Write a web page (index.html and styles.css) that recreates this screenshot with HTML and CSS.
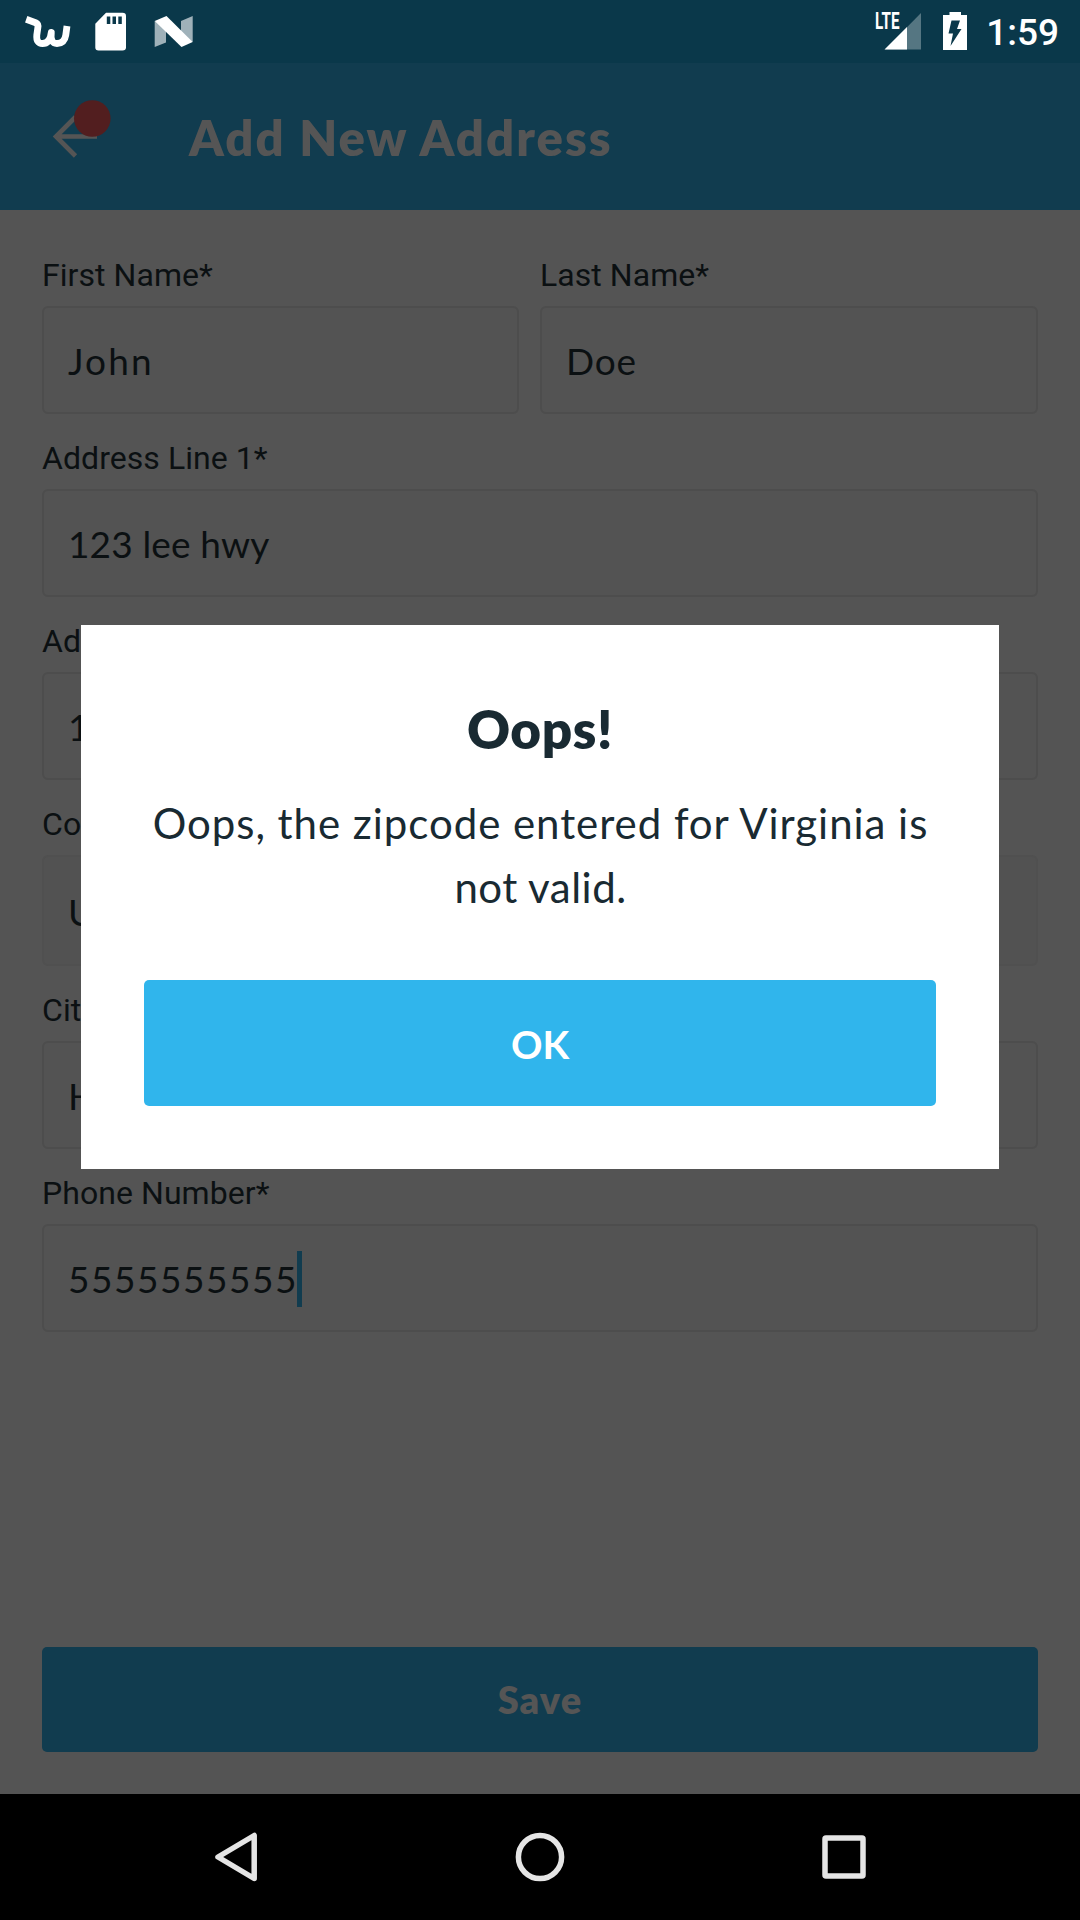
FILE: index.html
```
<!DOCTYPE html>
<html lang="en">
<head>
<meta charset="utf-8">
<title>Add New Address</title>
<link rel="stylesheet" href="styles.css">
</head>
<body>
<div class="screen">
  <header class="status">
    <svg class="status-left" width="220" height="63" viewBox="0 0 220 63">
      <path class="wish" d="M26.200 19.300L35.600 22.700Q38.600 24 37.800 28L36.800 35Q36 43.500 42.500 43.500Q50 43.500 51.300 32.500Q50 43.500 57 43.500Q64.500 43.500 65.800 35L67 26"/>
      <path fill="#fff" fill-rule="evenodd" d="M106 12.700H122.500Q126 12.700 126 16V47.500Q126 50.500 122.500 50.500H98.500Q95.300 50.500 95.300 47.500V23.800ZM106.800 16.500V24H110.300V16.500ZM112.500 16.500V24H116V16.500ZM118.300 16.500V24H121.800V16.500Z"/>
      <path fill="#9fb1b9" d="M154.700 21L166 27V42.500L154.700 47ZM181 21L192.700 16V42L181 36Z"/>
      <path fill="#fff" d="M154.700 21L166.500 16L192.700 42L181.500 47Z"/>
    </svg>
    <div class="status-right">
      <span class="signal">
        <svg width="48" height="63" viewBox="0 0 48 63">
          <path fill="#557682" d="M45 13V49.500H9Z"/>
          <path fill="#fff" d="M31 27V49.500H8.500Z"/>
        </svg>
        <span class="lte">LTE</span>
      </span>
      <svg class="battery" width="24" height="63" viewBox="0 0 24 63">
        <path fill="#fff" d="M6.500 12H18V15H24V50H0V15H6.500Z"/>
        <path fill="#0a384a" d="M8.500 20.500H17L14 29H18.500L7.500 46L10 33.500H5.500Z"/>
      </svg>
      <span class="clock">1:59</span>
    </div>
  </header>
  <div class="appbar">
    <svg class="back" width="80" height="60" viewBox="45 92 80 60">
      <path fill="none" stroke="#555" stroke-width="4.600" d="M75.500 117L56 136.500L75.500 156M56 136.500H97"/>
      <circle cx="92.300" cy="118.500" r="18.300" fill="#521e1f"/>
    </svg>
    <h1 class="title">Add New Address</h1>
  </div>
  <main class="form">
    <div class="row">
      <div class="group first"><div class="label">First Name*</div><div class="field john">John</div></div>
      <div class="group last"><div class="label">Last Name*</div><div class="field doe">Doe</div></div>
    </div>
    <div class="group"><div class="label">Address Line 1*</div><div class="field street">123 lee hwy</div></div>
    <div class="group"><div class="label">Ad</div><div class="field">1</div></div>
    <div class="group"><div class="label">Co</div><div class="field select">U</div></div>
    <div class="group"><div class="label">Cit</div><div class="field">H</div></div>
    <div class="group"><div class="label">Phone Number*</div><div class="field phone">5555555555<span class="caret"></span></div></div>
    <div class="save"><span>Save</span></div>
  </main>
  <nav class="nav">
    <svg width="50" height="60" viewBox="0 0 50 60"><path d="M43.200 8.500V51.500L7 30Z"/></svg>
    <svg width="60" height="60" viewBox="0 0 60 60"><circle cx="30" cy="30" r="21.600"/></svg>
    <svg width="50" height="60" viewBox="0 0 50 60"><rect x="6" y="11" width="38" height="38" rx="1"/></svg>
  </nav>
  <section class="modal">
    <h2 class="modal-title">Oops!</h2>
    <p class="message"><span class="line1">Oops, the zipcode entered for Virginia is</span><br><span class="line2">not valid.</span></p>
    <div class="ok"><span>OK</span></div>
  </section>
</div>
</body>
</html>
```
FILE: styles.css
```
* { box-sizing: border-box; }
body { margin: 0; background: #545454; font-family: Lato, "Open Sans", sans-serif; }
.screen { position: relative; width: 1080px; height: 1920px; overflow: hidden; display: flex; flex-direction: column; }

.status { height: 63px; flex: none; background: #0a384a; display: flex; justify-content: space-between; }
.wish { fill: none; stroke: #fff; stroke-width: 6.8; stroke-linejoin: round; }
.status-right { display: flex; padding-right: 21px; }
.signal { position: relative; width: 48px; margin-right: 19px; }
.signal svg, .battery { display: block; }
.lte { position: absolute; left: -1px; top: 11px; font: 700 23px/22px Roboto, sans-serif; color: #fff; transform: scaleX(.66); transform-origin: 0 0; }
.battery { margin-right: 19px; }
.clock { font: 500 37px/66px Roboto, sans-serif; color: #fff; }

.appbar { height: 147px; flex: none; background: #113c4f; display: flex; align-items: flex-start; padding: 29px 0 0 45px; }
.back { flex: none; overflow: visible; }
.title { margin: 15px 0 0 64px; font-size: 49px; line-height: 60px; font-weight: 800; letter-spacing: 2.05px; color: #555; white-space: nowrap; }

.form { flex: 1; padding: 46px 42px 42px; display: flex; flex-direction: column; gap: 25px; }
.row { display: flex; gap: 21px; }
.first { width: 477px; }
.last { flex: 1; }
.label { font: 400 32px/38px Roboto, sans-serif; letter-spacing: .06px; color: #0b1012; margin-bottom: 12px; white-space: nowrap; }
.field { height: 108px; border: 2px solid #4d4d4d; border-radius: 6px; background: #535353; padding: 1px 0 0 24px; display: flex; align-items: center; font-size: 37px; color: #0b1012; white-space: nowrap; }
.john { letter-spacing: 2.1px; }
.doe { letter-spacing: .8px; }
.street { letter-spacing: .15px; }
.phone { letter-spacing: 1.55px; }
.select { height: 111px; border-color: #505050; background: #525252; }
.caret { width: 5px; height: 56px; margin-left: -1px; background: #113c4f; }
.save { margin-top: auto; height: 105px; flex: none; border-radius: 5px; background: #113c4f; color: #555; display: flex; align-items: center; justify-content: center; padding-bottom: 2px; font-size: 38px; font-weight: 800; letter-spacing: 1.1px; }

.nav { height: 126px; flex: none; background: #000; display: flex; justify-content: space-between; align-items: center; padding: 0 211px; }
.nav svg { fill: none; stroke: #e5e5e5; stroke-width: 5.5; stroke-linejoin: round; }

.modal { position: absolute; left: 81px; top: 625px; width: 918px; height: 544px; background: #fff; padding: 72px 63px 63px; display: flex; flex-direction: column; color: #192a32; text-align: center; }
.modal-title { margin: 0; font-size: 53px; line-height: 64px; font-weight: 800; letter-spacing: .6px; }
.message { margin: 30px 0 0; padding-left: 1px; font-size: 42px; line-height: 64px; white-space: nowrap; }
.line1 { letter-spacing: .95px; }
.line2 { letter-spacing: .5px; }
.ok { margin-top: auto; height: 126px; flex: none; border-radius: 5px; background: #30b5ec; color: #fff; display: flex; align-items: center; justify-content: center; padding-top: 1px; font-size: 39px; font-weight: 700; }
```
